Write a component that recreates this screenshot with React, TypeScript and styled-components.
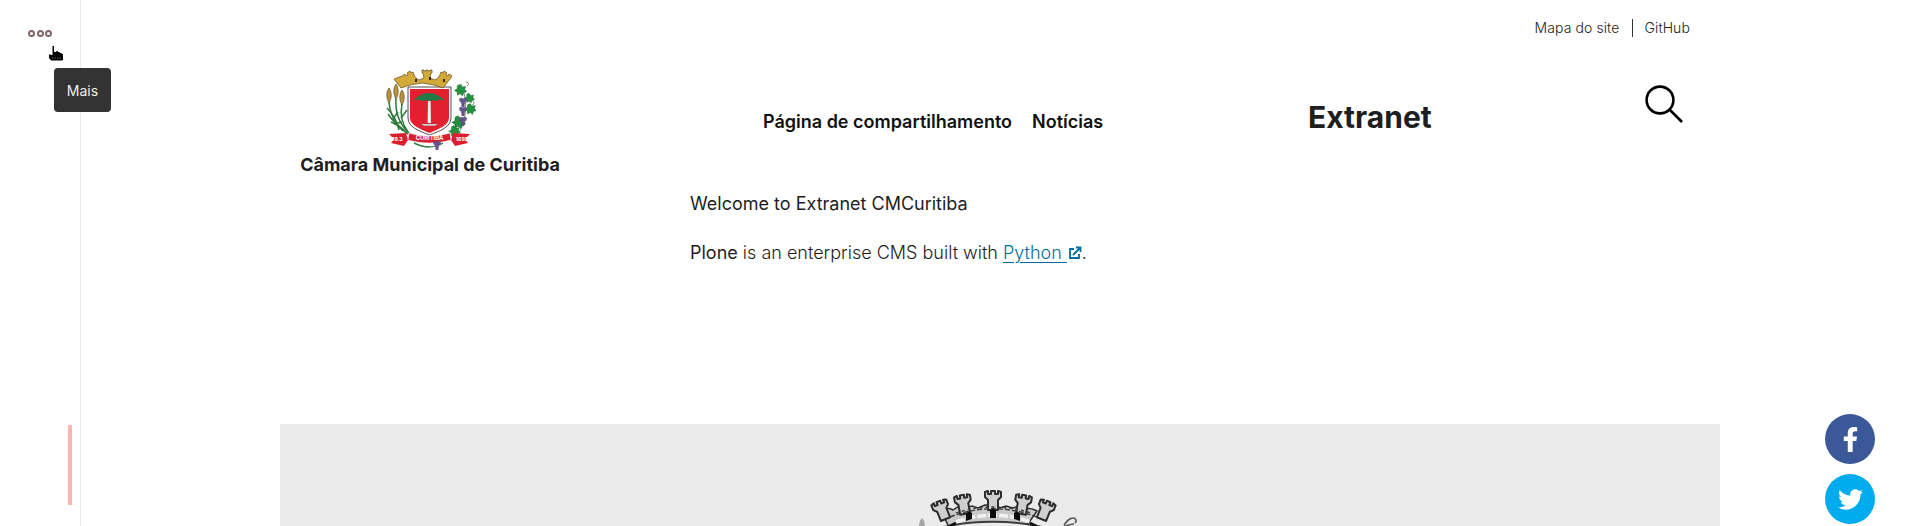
import { FC } from "react";
import styled, { createGlobalStyle } from "styled-components";
import { FaFacebookF, FaTwitter } from "react-icons/fa";

const GlobalStyle = createGlobalStyle`
  html, body {
    margin: 0;
    padding: 0;
    height: 526px;
    overflow: hidden;
    background: #fff;
    font-family: Inter, "Liberation Sans", sans-serif;
    color: #1e1e1e;
  }
`;

const Page = styled.div`
  display: flex;
  height: 526px;
  overflow: hidden;
  position: relative;
`;

const Toolbar = styled.aside`
  width: 80px;
  flex: none;
  border-right: 1px solid #e7eded;
  position: relative;
  display: flex;
  flex-direction: column;
  justify-content: space-between;
  padding: 30px 0 21px;
`;

const Dots = styled.div`
  display: flex;
  justify-content: center;
  gap: 1.5px;
`;

const Dot = styled.span`
  width: 7px;
  height: 7px;
  box-sizing: border-box;
  border: 2px solid #826a6a;
  border-radius: 50%;
`;

const Tooltip = styled.div`
  position: absolute;
  left: 54px;
  top: 68px;
  width: 57px;
  height: 44px;
  background: #333;
  border-radius: 4px;
  color: #eee;
  font-size: 14px;
  display: flex;
  align-items: center;
  justify-content: center;
  z-index: 3;
`;

const Pointer = styled.svg`
  position: absolute;
  left: 47px;
  top: 44px;
  z-index: 4;
`;

const StatusBar = styled.div`
  width: 4px;
  height: 80px;
  background: #ffb3b3;
  margin-left: 68px;
`;

const Main = styled.main`
  flex: 1;
`;

const Container = styled.div`
  width: 1440px;
  margin-left: 199px;
`;

const TopLinks = styled.nav`
  display: flex;
  justify-content: flex-end;
  align-items: center;
  height: 18px;
  padding: 19px 30px 0 0;
  font-size: 14px;
  font-weight: 300;
  letter-spacing: 0.1px;
  color: #222;
`;

const TopLink = styled.a`
  line-height: 18px;
  & + & {
    margin-left: 12px;
    padding-left: 12px;
    border-left: 1px solid #333;
  }
`;

const Header = styled.header`
  display: grid;
  grid-template-columns: 483px 545px 337px auto;
  height: 138px;
`;

const Brand = styled.div`
  width: 260px;
  margin-left: 20px;
  padding-top: 28px;
  display: flex;
  flex-direction: column;
  align-items: center;
`;

const BrandName = styled.div`
  font-size: 18px;
  font-weight: 700;
  line-height: 22px;
  white-space: nowrap;
`;

const MainNav = styled.nav`
  display: flex;
  gap: 20px;
  padding-top: 74px;
  font-size: 18px;
  font-weight: 600;
  line-height: 22px;
  color: #111;
`;

const SiteTitle = styled.div`
  font-size: 30px;
  font-weight: 700;
  line-height: 38px;
  padding-top: 61px;
`;

const SearchButton = styled.div`
  padding-top: 48px;
`;

const Content = styled.section`
  margin-left: 410px;
  height: 249px;
  padding-top: 15px;
  box-sizing: border-box;
  font-size: 18px;
  line-height: 27px;
`;

const Paragraph = styled.p<{ $light?: boolean }>`
  margin: 0 0 22px;
  font-weight: ${(p) => (p.$light ? 300 : 400)};
`;

const Strong = styled.span`
  font-weight: 400;
`;

const PythonLink = styled.a`
  color: #00709e;
  text-decoration: underline;
  text-underline-offset: 3px;
`;

const LinkIcon = styled.svg`
  margin-left: 1px;
  vertical-align: -1px;
`;

const Footer = styled.footer`
  background: #ebebeb;
  height: 103px;
  display: flex;
  justify-content: center;
  align-items: flex-end;
`;

const Social = styled.div`
  position: absolute;
  left: 1825px;
  top: 414px;
  display: flex;
  flex-direction: column;
  gap: 10px;
`;

const SocialButton = styled.a<{ $color: string }>`
  width: 50px;
  height: 50px;
  border-radius: 50%;
  background: ${(p) => p.$color};
  color: #fff;
  display: flex;
  align-items: center;
  justify-content: center;
  font-size: 25px;
`;

const Wheat: FC<{ x: number; y: number }> = ({ x, y }) => (
  <path
    d={`M${x} ${y}c-3 4-3 10 0 15c3-5 3-11 0-15z`}
    fill="#b8923e"
    stroke="#4f4a22"
    strokeWidth="0.6"
  />
);

const Leaf: FC<{ x: number; y: number; s?: number }> = ({ x, y, s = 1 }) => (
  <path
    transform={`translate(${x} ${y}) scale(${s})`}
    d="M0-6l2.4 2.8 3.4-.6-.8 3.4 2.2 2.2-3.4 1-1 3.4-2.6-2.2-3 1.6-.2-3.4-3-1.8 3-1.6.2-3.4z"
    fill="#23913f"
    stroke="#14552a"
    strokeWidth="0.4"
  />
);

const Grape: FC<{ x: number; y: number }> = ({ x, y }) => (
  <g fill="#6a5694" stroke="#3f3160" strokeWidth="0.3">
    <circle cx={x - 1.8} cy={y} r="1.9" />
    <circle cx={x + 1.8} cy={y} r="1.9" />
    <circle cx={x} cy={y + 2.8} r="1.9" />
    <circle cx={x} cy={y + 5.4} r="1.5" />
  </g>
);

const CoatOfArms: FC = () => (
  <svg width="92" height="89" viewBox="384 65 92 89">
    {/* wheat, left */}
    <g stroke="#2f7a3a" strokeWidth="1.5" fill="none">
      <path d="M389 102c1 12 7 24 19 32" />
      <path d="M396 98c-1 14 3 26 13 35" />
      <path d="M402 104c-2 10 0 20 6 28" />
      <path d="M387 108c6 6 10 13 12 22" />
      <path d="M391 122c6 2 11 6 17 12" />
      <path d="M388 114c4 6 10 12 15 17" />
      <path d="M398 112l-6 8M401 118l6-8M394 124l8-2" />
    </g>
    <Wheat x={389} y={88} />
    <Wheat x={396} y={84} />
    <Wheat x={402} y={90} />
    {/* vine, right */}
    <path d="M461 84c5 12 8 30-2 49M466 82c3 0 3 3 1 4M472 100c3 2 2 5 0 5" stroke="#3f5d3a" strokeWidth="0.7" fill="none" />
    <Leaf x={460} y={90} s={0.95} />
    <Leaf x={469} y={98} s={0.8} />
    <Leaf x={470} y={109} s={0.9} />
    <Leaf x={458} y={122} s={1.05} />
    <Leaf x={454} y={131} s={0.9} />
    <Grape x={463} y={100} />
    <Grape x={463} y={109} />
    <Grape x={463} y={119} />
    {/* shield */}
    <path
      d="M408 87h43v31c0 9-11 13-21.500 17c-10.500-4-21.500-8-21.500-17z"
      fill="#fff"
      stroke="#222"
      strokeWidth="0.8"
    />
    <path d="M410 89h39v29c0 7-10 11-19.500 15c-9.500-4-19.500-8-19.500-15z" fill="#e2202f" />
    {/* araucaria */}
    <path d="M413 101c4-5 11-8 16-8s12 3 16 8c-5-2-7-1-9 0c-2-1-4-1-7 0c-3-1-5-1-7 0c-2-1-5-2-9 0z" fill="#1f7a45" />
    <path d="M428 101h2.600l.4 22h-3.400z" fill="#efefef" />
    <path d="M421 124h17l-3 1.800h-11z" fill="#e8e8e8" stroke="#555" strokeWidth="0.3" />
    {/* crown */}
    <path
      d="M402 76l3-2 1 2 2-1-1-2 3-2 1 2 2-1 2 5 4 3 5-2-1-5-1 0v-3h2l0 1h2v-1h2v1h2v-1h2v3l-1 0-1 5 5 2 4-3 2-5 2 1 1-2 3 2-1 2 2 1 1-2 3 2-2 3-7 9-9-3-12-2-12 2-9 3-7-9z"
      fill="#d3a93a"
      stroke="#5f4a1c"
      strokeWidth="0.7"
    />
    <g fill="#3a2c10">
      <rect x="415" y="79" width="2" height="3" />
      <rect x="429" y="77" width="2" height="3" />
      <rect x="443" y="79" width="2" height="3" />
    </g>
    {/* scroll */}
    <path d="M389 134l17-1 2 7-4 6-13-3 3-4z" fill="#d91f2e" />
    <path d="M470 134l-17-1-2 7 4 6 13-3-3-4z" fill="#d91f2e" />
    <path d="M409 133c13 4 28 4 41 0l1 7c-14 4-29 4-43 0z" fill="#d91f2e" stroke="#fff" strokeWidth="0.5" />
    <text x="429.500" y="140" textAnchor="middle" fontSize="5.800" fontWeight="700" fill="#fff" fontFamily="Inter, sans-serif">
      CURITIBA
    </text>
    <text x="397" y="141" textAnchor="middle" fontSize="5.200" fontWeight="700" fill="#fff" fontFamily="Inter, sans-serif">
      29.3
    </text>
    <text x="462" y="141" textAnchor="middle" fontSize="5.200" fontWeight="700" fill="#fff" fontFamily="Inter, sans-serif">
      1693
    </text>
    <path d="M414 143c6 3 10 4 15 4s9-1 14-4" stroke="#2d7d3c" strokeWidth="1.400" fill="none" />
    <Grape x={437} y={143} />
  </svg>
);

const Tower: FC<{ x: number; y: number; r: number }> = ({ x, y, r }) => (
  <g transform={`translate(${x} ${y}) rotate(${r})`}>
    <path
      d="M-8-1v-5l3-1v3h3v-3h4v3h3v-3l3 1v5l-3 3v10h-10V2z"
      fill="#cfcfcf"
      stroke="#2c2c2c"
      strokeWidth="2"
      strokeLinejoin="round"
    />
  </g>
);

const FooterArms: FC = () => (
  <svg width="180" height="56" viewBox="910 470 180 56">
    {/* only the top of the crown shows above the fold */}
    <path
      d="M941 510c6-3 8-3 12-1l6-4 6 2 7-2 6 2 7-3 8 0 7 3 6-2 7 2 6-2 6 4c4-2 6-2 12 1l-14 20h-72z"
      fill="#c9c9c9"
      stroke="#2c2c2c"
      strokeWidth="1.500"
    />
    <Tower x={941} y={507} r={-22} />
    <Tower x={963} y={501} r={-10} />
    <Tower x={993} y={497} r={0} />
    <Tower x={1023} y={501} r={10} />
    <Tower x={1046} y={507} r={22} />
    <g fill="none" stroke="#3a3a3a" strokeWidth="1.400">
      <path d="M950 516c28-11 58-11 87 0" strokeDasharray="5 2" />
      <path d="M956 512c24-8 50-8 75 0" strokeDasharray="3 3" />
    </g>
    <path d="M956 521c24-9 50-9 75 0" fill="none" stroke="#f2f2f2" strokeWidth="3.500" strokeDasharray="9 2" />
    <g fill="#0c0c0c">
      <path d="M966 520v-7l3-3 3 2v6z" />
      <path d="M990 517v-7l3-3 3 3v7z" />
      <path d="M1014 518v-6l3-2 3 3v7z" />
    </g>
    <path d="M944 526c30-7 68-7 98 0v1h-98z" fill="#ebebeb" stroke="#3c3c3c" strokeWidth="2" />
    <path d="M948 526l8-4M1038 526l-8-4" stroke="#111" strokeWidth="3" />
    {/* wheat tip and vine tendril at the sides */}
    <path d="M919 526c0-4 1-7 3-9c2 2 3 5 3 9z" fill="#a5a5a5" />
    <path d="M1063 526c5-2 8-3 11-3M1064 524c3-4 5-7 9-7c3 0 4 3 2 5" fill="none" stroke="#555" strokeWidth="1.600" />
  </svg>
);

const App: FC = () => (
  <Page>
    <GlobalStyle />
    <Toolbar>
      <Dots>
        <Dot />
        <Dot />
        <Dot />
      </Dots>
      <StatusBar />
      <Pointer width="18" height="18" viewBox="0 0 18 18">
        <path
          d="M5 1.500h2.500v6H9V6.500h2v1h2v1h2v1h1.500V16L15 17H4l-2.500-3V10H4l1 1z"
          fill="#000"
          stroke="#fff"
          strokeWidth="1"
          strokeLinejoin="round"
        />
        <path d="M5 14h9" stroke="#777" strokeWidth="0.8" strokeDasharray="1.500 1" />
      </Pointer>
      <Tooltip>Mais</Tooltip>
    </Toolbar>
    <Main>
      <Container>
        <TopLinks>
          <TopLink>Mapa do site</TopLink>
          <TopLink>GitHub</TopLink>
        </TopLinks>
        <Header>
          <Brand>
            <CoatOfArms />
            <BrandName>Câmara Municipal de Curitiba</BrandName>
          </Brand>
          <MainNav>
            <a>Página de compartilhamento</a>
            <a>Notícias</a>
          </MainNav>
          <SiteTitle>Extranet</SiteTitle>
          <SearchButton>
            <svg width="38" height="38" viewBox="0 0 38 38" fill="none" stroke="#000" strokeWidth="2.600">
              <circle cx="15" cy="15" r="13.400" />
              <path d="M25 25l12 12" />
            </svg>
          </SearchButton>
        </Header>
        <Content>
          <Paragraph>Welcome to Extranet CMCuritiba</Paragraph>
          <Paragraph $light>
            <Strong>Plone</Strong> is an enterprise CMS built with{" "}
            <PythonLink>
              Python{" "}
              <LinkIcon width="14" height="14" viewBox="0 0 14 14" fill="none" stroke="#00709e" strokeWidth="1.800">
                <path d="M6 3H2v9h9V8" />
                <path d="M5 9l7-7M8 1.500h4.500V6" />
              </LinkIcon>
            </PythonLink>
            .
          </Paragraph>
        </Content>
        <Footer>
          <FooterArms />
        </Footer>
      </Container>
    </Main>
    <Social>
      <SocialButton $color="#3b5998">
        <FaFacebookF />
      </SocialButton>
      <SocialButton $color="#00aced">
        <FaTwitter />
      </SocialButton>
    </Social>
  </Page>
);

export default App;
